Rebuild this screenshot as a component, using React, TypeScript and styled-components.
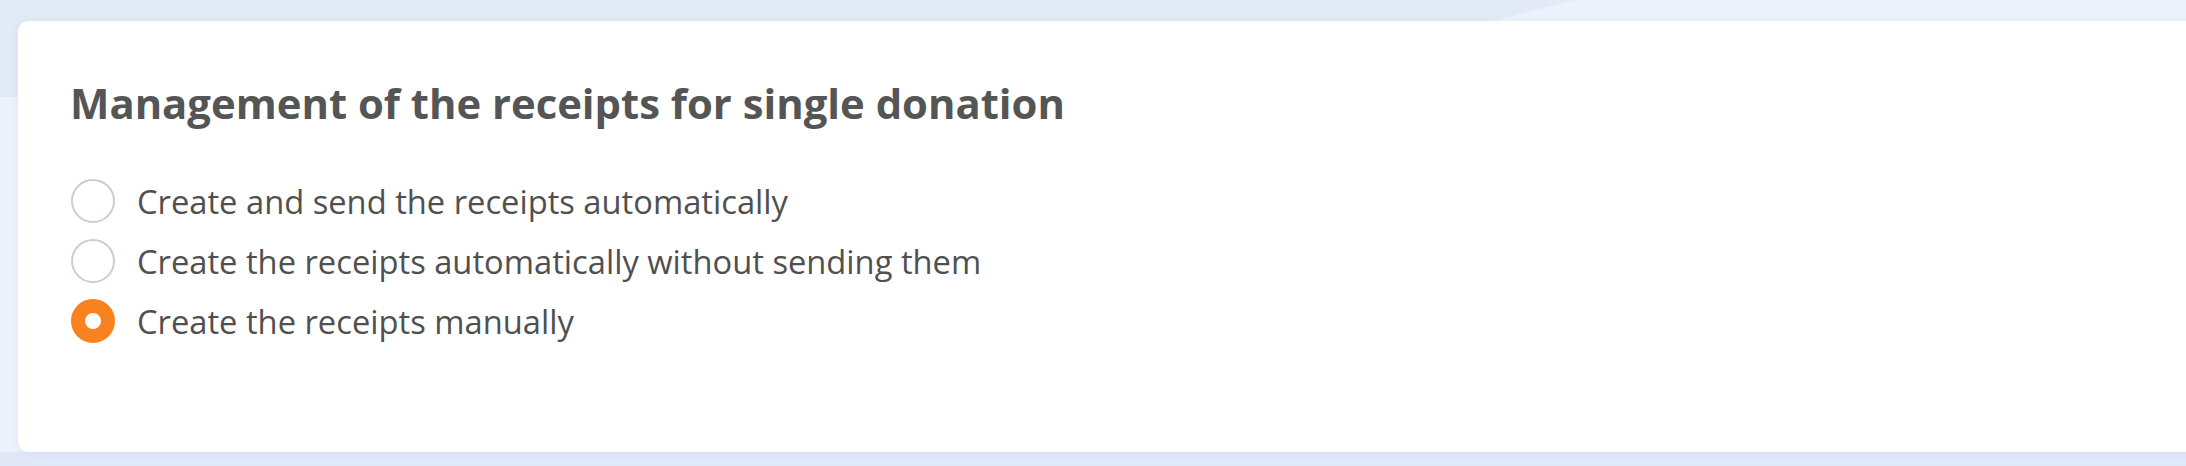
import { useState } from 'react'
import { createGlobalStyle, styled } from 'styled-components'

const GlobalStyle = createGlobalStyle`
  html, body {
    margin: 0;
    padding: 0;
  }
  body {
    background-color: #edf1fc;
    font-family: 'Open Sans', 'Noto Sans', sans-serif;
    overflow: hidden;
  }
`

type Option = {
  label: string
  value: string
}

const options: Option[] = [
  { label: 'Create and send the receipts automatically', value: 'auto-send' },
  { label: 'Create the receipts automatically without sending them', value: 'auto' },
  { label: 'Create the receipts manually', value: 'manual' },
]

const App = () => {
  const [selected, setSelected] = useState('manual')

  return (
    <Page>
      <GlobalStyle />
      <Card>
        <Title>Management of the receipts for single donation</Title>
        <RadioList>
          {options.map((option) => (
            <RadioRow key={option.value} onClick={() => setSelected(option.value)}>
              <RadioCircle checked={selected === option.value} />
              <RadioLabel>{option.label}</RadioLabel>
            </RadioRow>
          ))}
        </RadioList>
      </Card>
    </Page>
  )
}

const Page = styled.div`
  position: relative;
  width: 100vw;
  height: 466px;
  padding: 21px 0 0 18px;
  box-sizing: border-box;
  background: linear-gradient(to bottom, transparent 452px, #e1e9f9 452px);
  overflow: hidden;

  &::before {
    content: '';
    position: absolute;
    left: 0;
    top: 0;
    width: 1580px;
    height: 97px;
    background: #e2eaf7;
    clip-path: polygon(0 0, 1575px 0, 1192px 97px, 0 97px);
  }
`

const Card = styled.div`
  position: relative;
  height: 431px;
  margin-right: -30px;
  box-sizing: border-box;
  padding: 54px 54px 0 52px;
  background: #ffffff;
  border-radius: 10px;
  box-shadow: 0 2px 10px rgba(120, 140, 190, 0.1);
`

const Title = styled.h2`
  margin: 0 0 40px 0;
  font-size: 41.8px;
  line-height: 56px;
  font-weight: 700;
  color: #555555;
`

const RadioList = styled.div`
  display: flex;
  flex-direction: column;
  padding-left: 1px;
`

const RadioRow = styled.label`
  display: flex;
  align-items: center;
  gap: 22px;
  height: 60px;
  cursor: pointer;
`

const RadioCircle = styled.span<{ checked: boolean }>`
  width: 44px;
  height: 44px;
  box-sizing: border-box;
  border-radius: 50%;
  flex-shrink: 0;
  background: #ffffff;
  border: ${({ checked }) => (checked ? '14px solid #f7821f' : '2px solid #c9cdd4')};
`

const RadioLabel = styled.span`
  font-size: 32.7px;
  color: #505050;
`

export default App
